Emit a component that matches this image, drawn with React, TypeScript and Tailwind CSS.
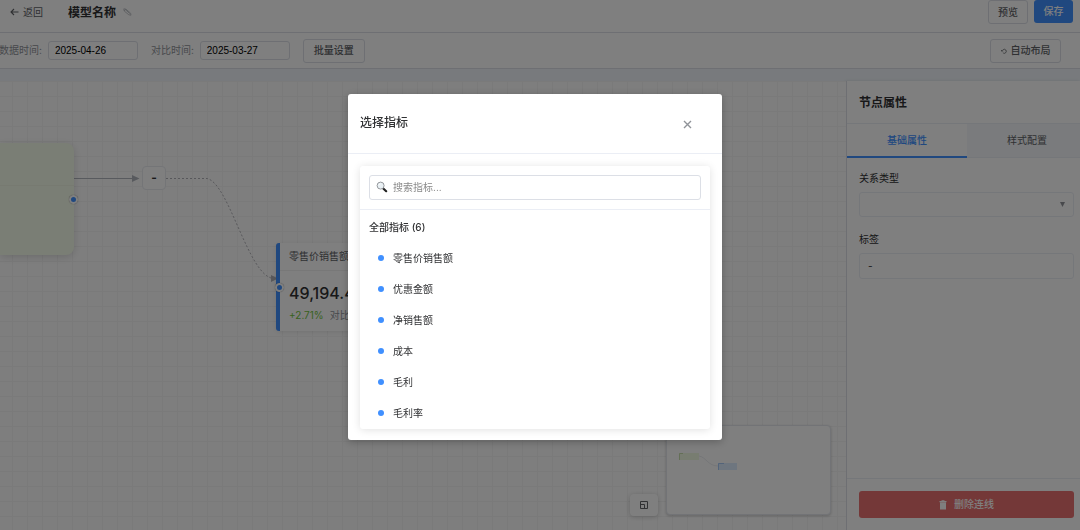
import { useState } from "react";
import clsx from "clsx";

const metrics = ["零售价销售额", "优惠金额", "净销售额", "成本", "毛利", "毛利率"];

const tabs = [
  { id: "basic", label: "基础属性" },
  { id: "style", label: "样式配置" },
];

function SearchIcon() {
  return (
    <svg viewBox="0 0 12 12" className="h-3 w-3 shrink-0" aria-hidden="true">
      <path d="M7 7.2 10.2 10.2" stroke="#222" strokeWidth="2.2" strokeLinecap="round" />
      <circle cx="4.6" cy="4.6" r="3.5" fill="#e9f0f4" stroke="#8b8f93" strokeWidth="0.9" />
      <path d="M2.8 4.2c.2-.8.8-1.3 1.6-1.4" stroke="#fff" strokeWidth="0.8" fill="none" />
    </svg>
  );
}

function TopBar() {
  return (
    <header className="flex h-[33px] shrink-0 items-start justify-between border-b border-[#dcdfe6] bg-white pr-[7px] pl-2.5">
      <div className="flex h-6 items-center">
        <button type="button" className="flex items-center gap-1 text-[10px] text-[#606266]">
          <svg viewBox="0 0 9 8" className="h-2 w-[9px]" fill="none" stroke="currentColor" aria-hidden="true">
            <path d="M8.5 4H1M4 1 1 4l3 3" strokeWidth="1.1" />
          </svg>
          返回
        </button>
        <h1 className="ml-[25px] pt-px text-[12px] font-semibold text-[#303133]">模型名称</h1>
        <button type="button" aria-label="编辑名称" className="ml-[7px] text-[#b4b7bd]">
          <svg viewBox="0 0 9 8" className="h-2 w-[9px]" fill="none" stroke="currentColor" strokeWidth="0.8" aria-hidden="true">
            <path d="M.8.8 1.2 3l4.6 3.8 2.2.4-.4-2L3 1.2zM2.4 1.6l4.4 4M1.2 3l1.6-1.8" />
          </svg>
        </button>
      </div>
      <div className="flex gap-1.5 text-[10px] font-medium">
        <button type="button" className="h-6 w-10 rounded-[3px] border border-[#dcdfe6] bg-white text-[#606266]">
          预览
        </button>
        <button type="button" className="h-[23px] w-[39px] rounded-[3px] bg-[#4090ff] text-white">
          保存
        </button>
      </div>
    </header>
  );
}

function DateField({ id, label, value }: { id: string; label: string; value: string }) {
  return (
    <div className="flex items-center gap-1.5">
      <label htmlFor={id} className="text-[10px] whitespace-nowrap text-[#909399]">
        {label}
      </label>
      <input
        id={id}
        defaultValue={value}
        className="h-[19px] w-[90px] rounded-[3px] border border-[#dcdfe6] bg-white px-1.5 font-['Liberation_Sans','Noto_Sans_CJK_SC',sans-serif] text-[10px] text-black"
      />
    </div>
  );
}

function Toolbar() {
  return (
    <div className="flex h-9 shrink-0 items-center justify-between border-b border-[#dcdfe6] bg-white pr-[19px]">
      <div className="-ml-px flex items-center gap-[13px]">
        <DateField id="data-date" label="数据时间:" value="2025-04-26" />
        <DateField id="compare-date" label="对比时间:" value="2025-03-27" />
        <button type="button" className="h-6 w-[62px] rounded-[3px] border border-[#dcdfe6] bg-white text-[10px] font-medium text-[#606266]">
          批量设置
        </button>
      </div>
      <button
        type="button"
        className="flex h-6 w-[71px] items-center justify-center gap-1 rounded-[3px] border border-[#dcdfe6] bg-white text-[10px] font-medium text-[#606266]"
      >
        <svg viewBox="0 0 6 6" className="h-1.5 w-1.5" fill="none" stroke="currentColor" strokeWidth="0.8" aria-hidden="true">
          <path d="M.4 2.800h1.800M1.300 1.900.4 2.800l.9.9M2.200 1.600a2 2 0 1 1 0 3.400" />
        </svg>
        自动布局
      </button>
    </div>
  );
}

function Handle({ className }: { className: string }) {
  return <span className={clsx("absolute h-[9px] w-[9px] rounded-full border-2 border-white bg-[#4090ff] shadow-[0_0_1px_#00000080]", className)} />;
}

function Canvas() {
  return (
    <main className="relative flex-1 overflow-hidden bg-[#fdfdfd] bg-[linear-gradient(to_right,#f4f4f4_1px,transparent_1px),linear-gradient(to_bottom,#f4f4f4_1px,transparent_1px)] bg-[size:15px_15px] bg-[position:12px_0px]">
      <svg width="360" height="300" className="absolute top-0 left-0" fill="none" aria-hidden="true">
        <path d="M74 97.500H133" stroke="#b1b5bd" />
        <path d="M132 94 139.500 97.500 132 101z" fill="#b1b5bd" />
        <path d="M166 97.500H207C229 102 248 194 273 197.500" stroke="#b1b1b7" strokeDasharray="2 2" />
        <path d="M271 194 278 197.500 271 201z" fill="#b1b1b7" />
      </svg>

      {/* source node, mostly scrolled out on the left */}
      <div className="absolute top-[62px] left-0 h-[112px] w-[74px] rounded-r-lg bg-[#f5fcea] shadow-[0_2px_8px_#00000026]">
        <div className="h-[43px] border-b border-[#eef5e2]" />
        <Handle className="top-[52px] -right-1" />
      </div>

      <div className="absolute top-[85px] left-[142px] flex h-6 w-6 items-center justify-center rounded-[4px] border border-[#e8eaef] bg-white text-[12px] font-bold text-[#303133]">
        -
      </div>

      <div className="absolute top-[162px] left-[276px] h-[88px] w-[170px] rounded-[3px] border-l-4 border-[#4090ff] bg-white shadow-[0_1px_5px_#0000001a]">
        <div className="border-b border-[#f0f0f0] pl-[9px] text-[10px] leading-[27px] text-[#606266]">零售价销售额</div>
        <div className="pt-3 pl-[9px]">
          <div className="text-[16px] leading-5 font-medium text-[#303133]">49,194.40</div>
          <div className="mt-1 flex gap-1.5 text-[10px] leading-4">
            <span className="text-[#73c43f]">+2.71%</span>
            <span className="text-[#909399]">对比日期</span>
          </div>
        </div>
        <Handle className="top-10 -left-[5px]" />
      </div>

      <button
        type="button"
        aria-label="缩略图"
        className="absolute right-[188px] bottom-3.5 flex h-[22px] w-7 items-center justify-center rounded-[4px] bg-white text-[#606266] shadow-[0_1px_5px_#00000033]"
      >
        <svg viewBox="0 0 8 8" className="h-2 w-2" fill="none" stroke="currentColor" aria-hidden="true">
          <path d="M.5.5h7v7h-7zM.5 3.500h4v4" />
        </svg>
      </button>
      <div className="absolute right-[15px] bottom-[15px] h-[90px] w-[165px] rounded-[4px] border border-[#e4e7ed] bg-white shadow-[0_1px_3px_#00000033]">
        <svg viewBox="0 0 163 88" className="h-full w-full" fill="none" aria-hidden="true">
          <path d="M12 27h20v7H12z" fill="#f0fae2" />
          <path d="M12.500 34v-6.500H16" stroke="#c8dfae" />
          <path d="M32 30c7 1 9 10 19 10" stroke="#dcdfe6" strokeWidth="0.6" />
          <path d="M51 37h19v7H51z" fill="#dcecff" />
          <path d="M51.500 44v-6.500H57" stroke="#a6c8f5" />
        </svg>
      </div>
    </main>
  );
}

function PropertyPanel() {
  const [activeTab, setActiveTab] = useState("basic");

  return (
    <aside className="flex w-[234px] shrink-0 flex-col overflow-hidden border-l border-[#dcdfe6] bg-white shadow-[-1px_0_3px_#0000001a]">
      <h2 className="border-b border-[#ebeef5] pt-0.5 pl-3 text-[12px] leading-10 font-semibold text-[#303133]">节点属性</h2>
      <div className="flex h-[34px]" role="tablist">
        {tabs.map((tab) => (
          <button
            key={tab.id}
            type="button"
            role="tab"
            aria-selected={activeTab === tab.id}
            onClick={() => setActiveTab(tab.id)}
            className={clsx(
              "w-[120px] shrink-0 text-[10px]",
              activeTab === tab.id
                ? "border-b-2 border-[#4090ff] bg-white font-medium text-[#4090ff]"
                : "border-b border-[#ebeef5] bg-[#f5f7fa] text-[#606266]"
            )}
          >
            {tab.label}
          </button>
        ))}
      </div>
      <div className="flex flex-1 flex-col gap-3.5 pt-3 pr-1.5 pl-3 text-[10px] text-[#303133]">
        <div>
          <label htmlFor="relation" className="block leading-4">
            关系类型
          </label>
          <div className="relative mt-1.5">
            <select id="relation" defaultValue="" className="block h-[25px] w-full appearance-none rounded-[3px] border border-[#ebeef5] bg-white px-2">
              <option value="" />
            </select>
            <span className="pointer-events-none absolute inset-y-0 right-[9px] flex items-center text-[#909399]">
              <svg viewBox="0 0 5 5" className="h-[5px] w-[5px]" fill="currentColor" aria-hidden="true">
                <path d="M0 0h5L2.500 5z" />
              </svg>
            </span>
          </div>
        </div>
        <div>
          <label htmlFor="edge-label" className="block leading-4">
            标签
          </label>
          <input id="edge-label" defaultValue="-" className="mt-1.5 block h-[26px] w-full rounded-[3px] border border-[#ebeef5] bg-white px-2" />
        </div>
      </div>
      <div className="border-t border-[#ebeef5] pt-3 pr-1.5 pb-3 pl-3">
        <button type="button" className="flex h-[27px] w-full items-center justify-center gap-[7px] rounded-[3px] bg-[#e87070] text-[10px] font-medium text-white">
          <svg viewBox="0 0 8 10" className="h-2.5 w-2" fill="currentColor" aria-hidden="true">
            <path d="M.5 1h2V.3h3V1h2v1.200h-7zM1 2.600h6V9.500H1z" />
          </svg>
          删除连线
        </button>
      </div>
    </aside>
  );
}

function MetricDialog({ onClose }: { onClose: () => void }) {
  const [keyword, setKeyword] = useState("");
  const visible = metrics.filter((name) => name.includes(keyword));

  return (
    <div className="fixed inset-0 flex items-center justify-center bg-black/50 pt-[3px] pr-2.5">
      <div role="dialog" aria-labelledby="dialog-title" className="w-[374px] rounded-[3px] bg-white shadow-[0_2px_8px_#00000040]">
        <div className="flex h-[60px] items-center justify-between border-b border-[#ebeef5] pr-[30px] pl-3">
          <h2 id="dialog-title" className="text-[12px] font-medium text-[#303133]">
            选择指标
          </h2>
          <button type="button" aria-label="关闭" onClick={onClose} className="pt-0.5 text-[#909399]">
            <svg viewBox="0 0 9 9" className="h-[9px] w-[9px]" fill="none" stroke="currentColor" strokeWidth="1.4" aria-hidden="true">
              <path d="m1 1 7 7M8 1 1 8" />
            </svg>
          </button>
        </div>
        <div className="px-3 pt-3 pb-[11px]">
          <div className="rounded-[3px] bg-white shadow-[0_1px_8px_#0000001f]">
            <div className="border-b border-[#ebeef5] p-[9px]">
              <label className="flex h-[25px] items-center gap-[5px] rounded-[3px] border border-[#dcdfe6] pl-1.5">
                <SearchIcon />
                <input
                  value={keyword}
                  onChange={(e) => setKeyword(e.target.value)}
                  placeholder="搜索指标..."
                  aria-label="搜索指标"
                  className="min-w-0 flex-1 text-[10px] text-[#303133] outline-none placeholder:text-[#8a8a8a]"
                />
              </label>
            </div>
            <h3 className="px-[9px] pt-[3px] pb-0.5 text-[10px] leading-7 font-medium text-[#303133]">全部指标 ({visible.length})</h3>
            <ul>
              {visible.map((name) => (
                <li key={name}>
                  <button type="button" className="flex h-[31px] w-full items-center gap-[9px] pl-[18px] text-[10px] text-[#303133]">
                    <span className="h-1.5 w-1.5 rounded-full bg-[#4090ff]" />
                    {name}
                  </button>
                </li>
              ))}
            </ul>
          </div>
        </div>
      </div>
    </div>
  );
}

export default function App() {
  const [dialogOpen, setDialogOpen] = useState(true);

  return (
    <div className="flex h-screen flex-col overflow-hidden bg-[#f0f5fa] font-[Inter,'Noto_Sans_CJK_SC',sans-serif]">
      <TopBar />
      <Toolbar />
      <div className="flex min-h-0 flex-1 pt-3">
        <Canvas />
        <PropertyPanel />
      </div>
      {dialogOpen && <MetricDialog onClose={() => setDialogOpen(false)} />}
    </div>
  );
}
